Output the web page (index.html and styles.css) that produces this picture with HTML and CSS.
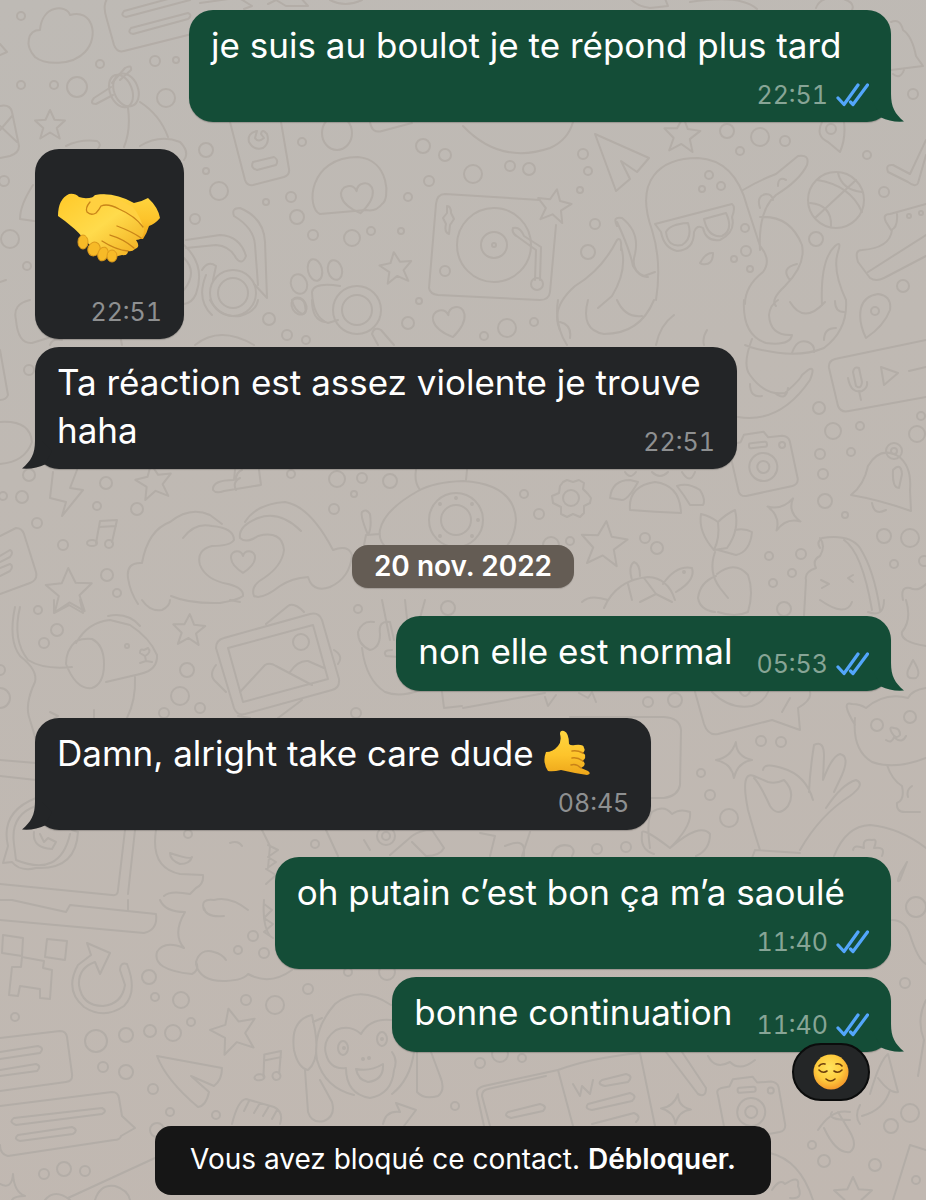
FILE: index.html
```html
<!DOCTYPE html>
<html lang="fr">
<head>
<meta charset="utf-8">
<meta name="viewport" content="width=device-width, initial-scale=1">
<title>Discussion</title>
<link rel="stylesheet" href="styles.css">
</head>
<body>
<svg class="wallpaper" viewBox="0 0 926 1200" preserveAspectRatio="xMidYMin slice" aria-hidden="true">
  <defs>
    <path id="star" vector-effect="non-scaling-stroke" d="M0-10L3-3.5L10-3L4.5 2L6.5 9L0 5L-6.5 9L-4.5 2L-10-3L-3-3.5Z"/>
    <path id="spark" vector-effect="non-scaling-stroke" d="M0-10Q1-2 10-1Q2 1 1 10Q-1 2-10 1Q-2-1 0-10Z"/>
    <path id="heart" vector-effect="non-scaling-stroke" d="M0 9C-14 0-11-9-5-9Q-1-9 0-5Q1-9 5-9C11-9 14 0 0 9Z"/>
    <g id="note"><path d="M-6 10L-2-12L15-13L10 9M-3-6L14-7"/><ellipse cx="-10" cy="10" rx="5" ry="3"/><ellipse cx="7" cy="11" rx="4" ry="4"/></g>
    <path id="plane" d="M-20-28L34-4L22 10L6-1L15 17L1 29Z"/>
    <g id="camera"><path d="M-32-16Q-34-22-28-23L-20-24L-16-31L4-32L8-26L22-26Q28-25 29-20L33 18Q33 24 27 25L-20 30Q-26 30-27 25Z"/><circle cx="0" cy="3" r="14"/><circle cx="0" cy="3" r="6"/><circle cx="21" cy="-17" r="3"/><rect x="-12" y="-22" width="18" height="5" rx="2"/></g>
  </defs>
  <!-- top left -->
  <path d="M40 30C42 5 66 4 70 15C92 8 100 36 85 52C72 66 45 65 35 57C24 45 28 30 40 30Z"/>
  <path d="M110-6C104 2 103 8 107 20L114 45Q117 53 124 51L192 34M124 11L190-7Q196-6 190 0L126 17Q120 16 124 11ZM131 28L188 13Q193 15 188 19L133 34Q127 33 131 28ZM200 3L250-4M236-4L252 6L244 9"/>
  <path d="M0 44L7 52L0 55M0 106Q10 104 12 112L19 146Q19 153 10 156L0 158M0 130L12 116M0 126L17 142"/>
  <ellipse cx="126" cy="90" rx="12" ry="17" transform="rotate(-22 126 90)"/><ellipse cx="121" cy="91" rx="11" ry="17" transform="rotate(-22 121 91)"/>
  <path d="M112 83L125 68Q132 64 131 70L120 80M111 87L94 98Q89 104 96 104L113 95M128 108Q131 130 124 147M140 102Q160 115 168 137M66 146Q80 139 97 141Q102 144 98 149M140 146Q160 134 180 142Q190 152 184 160M33 185Q20 205 20 219L34 221M0 282L6 280"/>
  <use href="#star" transform="translate(50 125) scale(1.5)"/>
  <path d="M230 122L245 180Q247 186 253 185L284 177Q290 175 289 169L281 122M253 162L274 157Q279 160 276 165L257 170Q250 168 253 162ZM257 131Q247 133 249 142Q254 151 263 148Q270 143 267 134Q262 128 261 134L264 138Q258 143 255 138Z"/>
  <ellipse cx="337" cy="133" rx="15" ry="17"/>
  <path d="M320 214C306 208 308 157 358 157C390 160 390 200 382 204Q376 212 366 210L320 214M370 122Q372 134 382 131L412 123"/>
  <use href="#heart" transform="translate(358 199) rotate(-10) scale(1.6)"/>
  <path d="M186 240L220 235Q240 236 246 256Q242 266 236 258Q230 246 216 245L186 248M234 216Q231 208 240 208Q264 218 265 242L267 298L254 284M258 285L255 245Q254 228 234 216M184 245Q206 265 196 294Q192 303 184 304M184 258Q198 272 184 290M202 270Q208 260 216 266L213 280M206 275Q196 300 212 315"/>
  <circle cx="233" cy="293" r="23"/><circle cx="233" cy="293" r="15"/>
  <ellipse cx="299" cy="284" rx="8" ry="10" transform="rotate(-20 299 284)"/><ellipse cx="315" cy="270" rx="7" ry="11" transform="rotate(-14 315 270)"/><ellipse cx="335" cy="270" rx="7" ry="10" transform="rotate(-14 335 270)"/><ellipse cx="299" cy="306" rx="7" ry="9" transform="rotate(-30 299 306)"/>
  <path d="M340 286Q314 282 312 292Q313 318 328 323L338 320M372 334Q374 326 381 330L394 345M372 334L378 345"/>
  <circle cx="357" cy="310" r="24"/><circle cx="357" cy="310" r="15"/>
  <use href="#star" transform="translate(396 268) rotate(-8) scale(1.6)"/>
  <use href="#heart" transform="translate(450 323) rotate(-12) scale(1.6)"/>
  <!-- turntable -->
  <path d="M540 200L445 194Q437 194 436 204L429 288Q430 294 438 295L540 300Q549 300 550 292L556 225M447 206Q451 206 451 213L454 219L450 225L449 234Q444 232 446 224L443 218L447 213ZM513 228Q520 226 524 236L541 247L540 280M513 228Q511 233 518 237L536 250L535 280"/>
  <circle cx="494" cy="245" r="37"/><circle cx="494" cy="245" r="13"/><circle cx="494" cy="245" r="2"/><circle cx="537" cy="284" r="6"/><circle cx="445" cy="271" r="5"/>
  <use href="#star" transform="translate(554 206) rotate(10) scale(1.7)"/>
  <!-- top right -->
  <path d="M463 126Q500 165 550 148Q568 140 573 122M628-5Q634 6 650 8L668 6L664-4M690 2Q740-6 757 9M330 0Q345 8 362 0M268 4L276 0L286 6L308 6L300-3M816 8Q820-4 840-2Q856 2 852 10"/>
  <use href="#plane" transform="translate(615 162)"/>
  <use href="#star" transform="translate(682 135) rotate(4) scale(1.8)"/>
  <path d="M652 230C634 180 660 158 698 158Q735 160 747 206L760 246Q772 260 763 272Q745 286 745 304M652 230Q662 262 656 300M655 224L732 204Q736 207 732 217Q736 232 720 240Q706 242 703 228Q697 224 694 232Q694 250 677 251Q664 248 661 232ZM666 232Q670 224 688 223Q693 238 682 245Q668 248 666 232ZM704 219L726 213Q734 230 722 236Q708 238 704 219ZM700 263Q706 252 713 253Q713 266 702 264ZM743 190Q760 180 776 174L798 156Q810 154 807 165Q800 180 776 195Q758 210 760 250M760 217Q790 215 802 245Q806 265 785 286Q770 300 776 306M617 226Q612 216 622 218Q640 232 635 254Q630 270 644 276L655 272M617 222Q630 250 633 266Q640 278 648 277M621 250Q622 236 617 240Q602 270 575 286Q550 308 560 330M621 246Q628 270 612 296L598 308M760 208Q756 196 766 194Q772 194 773 200M778 186Q778 176 786 180M822 305Q820 260 835 246Q842 240 838 252Q832 270 846 300M790 280Q780 268 797 264"/>
  <circle cx="836" cy="200" r="28"/><path d="M817 180Q850 185 862 212M810 203Q832 205 831 226M815 218L856 180M838 173Q842 190 862 192"/>
  <path d="M926 155L918 183Q916 188 908 182L888 172Q885 164 893 165L910 174L926 140M926 204L890 214Q882 214 886 222L891 230Q898 228 897 214M892 230Q890 248 862 250Q854 250 858 262L870 278Q876 282 884 278L926 256M868 272L926 235M822 122Q815 136 828 142L840 152Q846 138 844 122"/>
  <circle cx="831" cy="129" r="5"/><path d="M891 22Q900 18 903 30Q912 36 916 56L923 66L891 70M893 74Q900 80 904 70"/>
  <!-- octopus body, voice note, map pin -->
  <path d="M558 300Q554 325 567 345M588 300Q580 330 604 334Q640 334 654 300M656 345Q660 325 674 315M704 345Q702 338 707 330M617 300Q625 318 642 316M560 322Q572 325 570 338M744 300Q742 335 766 343Q790 346 792 335Q770 336 769 315Q770 305 778 300M846 300Q848 330 824 348Q795 360 750 347L745 345M752 339Q742 365 750 375Q765 396 785 393Q800 380 802 375L808 370Q816 365 810 380Q780 424 738 417M750 384Q750 398 762 396M775 393Q786 402 788 388M792 353Q797 338 808 342Q815 345 814 352M824 340Q824 328 836 328M835 301Q835 312 844 312M790 302Q804 325 825 302"/>
  <path d="M866 338Q858 322 861 308Q864 296 878 294Q892 296 890 310Q884 326 866 338ZM926 340L835 359Q828 361 829 368L838 406Q841 413 849 411L926 397M853 372Q854 366 859 368L862 382Q861 390 856 386ZM848 378Q851 394 862 391Q868 388 867 382M859 391L861 400M881 367L898 373L884 385ZM909 371L926 367"/>
  <circle cx="875" cy="311" r="4"/>
  <use href="#camera" transform="translate(763 464) rotate(-6)"/>
  <path d="M851 495Q864 485 868 466Q880 446 898 456Q912 466 910 490L911 511Q880 500 851 495ZM893 470Q901 462 902 474L899 488Q892 488 893 470ZM872 503Q874 516 886 510"/><circle cx="894" cy="451" r="8"/><circle cx="894" cy="451" r="3"/>
  <!-- left middle -->
  <path d="M30 300Q12 304 16 320Q18 344 32 343L48 338M0 350L8 395Q6 400 0 400M0 422Q30 420 32 442Q25 462 0 464M50 345Q52 338 62 340M195 345Q220 325 254 345M210 300Q220 318 240 316Q256 312 258 300M292 300Q300 296 304 302Q308 314 302 314Q294 310 292 300ZM312 300Q312 320 325 322M122 345L120 335"/>
  <path d="M53 472L50 498L66 502L62 516L83 490L70 488L77 470M235 470L234 480Q212 480 213 490Q216 494 224 491L261 485L259 470M236 480Q236 472 242 470M236 490Q232 482 240 478"/>
  <use href="#star" transform="translate(154 482) rotate(-10) scale(1.8)"/>
  <use href="#note" transform="translate(102 533)"/>
  <path d="M0 536L16 528Q22 528 24 534L36 572Q38 580 30 583L0 594M0 556L10 550Q14 552 10 557L0 562M0 568L10 564Q14 566 10 571L0 576"/>
  <use href="#star" transform="translate(69 591) rotate(-2) scale(2.3)"/>
  <path d="M142 563Q148 530 170 522Q190 506 210 515L222 524M183 538Q195 522 212 526Q234 528 234 540Q230 546 212 546Q196 550 200 565Q206 580 228 584Q244 588 243 596Q238 600 220 603Q190 604 171 596M142 563Q126 562 128 578Q130 592 138 604M245 522Q256 504 285 502Q310 506 333 550Q348 544 352 555Q350 578 330 587Q316 592 310 582L308 577M301 531Q280 510 258 518Q238 526 240 538Q246 544 258 536Q282 530 284 550Q282 566 264 578Q250 586 254 596Q262 600 280 586Q292 578 308 577"/>
  <use href="#heart" transform="translate(243 562) scale(1.2)"/>
  <!-- eye-shaped fish, gear, flower -->
  <path d="M418 491Q384 510 380 530Q376 550 414 562L486 562Q514 550 516 520Q514 484 463 481Q434 482 418 491ZM416 470Q414 482 420 490M467 470L466 480M368 535Q360 516 362 512Q366 508 370 514Q372 528 368 535ZM380 534L366 535L364 545"/>
  <circle cx="456" cy="520" r="27"/><circle cx="456" cy="520" r="15"/><circle cx="456" cy="498" r="1"/><circle cx="472" cy="504" r="1"/><circle cx="478" cy="520" r="1"/><circle cx="472" cy="536" r="1"/><circle cx="440" cy="504" r="1"/><circle cx="440" cy="536" r="1"/>
  <path d="M563 482L567 480L573 482L579 480L584 483L583 489L588 494L591 498L590 503L584 506L584 513L580 517L573 514L567 517L561 514L561 507L553 503L552 496L559 493L560 486Z"/><circle cx="571" cy="498" r="8"/>
  <path d="M630 510Q628 486 655 482Q680 485 681 513Q655 512 630 510ZM638 482Q628 500 622 500L610 498Q612 480 630 480ZM677 486Q688 482 700 490Q706 500 703 505L690 505Q684 495 677 486ZM625 472Q630 480 636 472M652 472Q660 480 668 472M682 472Q690 485 695 472"/>
  <use href="#star" transform="translate(604 544) rotate(6) scale(2.3)"/>
  <use href="#spark" transform="translate(784 514) rotate(30) scale(1.8)"/>
  <path d="M714 550Q698 532 701 514Q710 516 718 522Q720 538 714 550ZM718 522Q726 514 735 510Q740 530 727 548L714 550M735 530Q745 528 752 532Q750 552 736 555L718 550M715 552Q708 572 720 588L728 598M717 574Q735 560 748 575Q754 592 748 612Q735 618 718 612M716 576Q700 582 698 598Q700 610 715 612"/>
  <path d="M604 608Q616 580 648 577Q668 578 675 600M632 580Q628 566 634 562Q640 564 640 576M663 584Q676 565 692 568Q696 580 676 592M582 602Q590 594 608 600M644 578L656 594L672 602M656 594L640 602M628 584L632 600"/>
  <circle cx="684" cy="572" r="1"/><path d="M820 548Q816 542 822 538Q850 534 860 548Q874 570 880 610M820 538Q826 546 820 556Q812 560 816 568Q804 572 806 580L804 616M844 540Q862 552 872 610M821 580L829 584L822 588M853 575L848 578L853 582M903 600Q900 586 910 588Q918 592 926 584"/>
  <!-- dog, photo -->
  <path d="M15 607Q8 640 20 656Q38 670 35 682Q24 705 30 720L36 740M20 607Q12 640 28 660Q44 670 72 667M76 643Q88 622 110 620L130 625Q150 638 157 655Q158 670 140 674L106 682M108 616Q128 612 140 626M76 641Q66 650 66 664Q76 690 92 688Q104 684 104 664Q104 645 92 639Q84 638 76 641M135 677Q136 700 127 718M94 718L94 710M50 712L58 716L52 720M144 650Q140 648 140 653L145 656Q152 652 148 648ZM145 656L146 661L140 663M146 661L152 662M54 600L54 613L69 605L83 613L80 600M142 600Q150 612 162 610Q170 606 170 600M230 600L240 602"/>
  <circle cx="127" cy="646" r="2"/>
  <use href="#star" transform="translate(189 630) rotate(3) scale(1.6)"/>
  <path d="M224 638L310 614Q319 612 322 620L339 679Q340 688 332 690L245 714Q237 716 234 708L216 648Q216 640 224 638ZM228 648L313 625L328 679L243 702ZM240 692L265 665Q270 662 276 666L312 685M290 672Q298 660 308 661L324 668M266 624L288 606Q294 602 304 612M216 665Q208 675 216 682L226 692M334 650Q344 656 338 664M238 716L250 718M278 718L302 700"/>
  <circle cx="301" cy="642" r="8"/>
  <path d="M382 600L390 640M405 600L408 628M425 600L420 618M374 622Q362 620 358 632Q358 645 370 650Q380 648 380 634Q378 620 390 622L394 640M392 650Q382 650 386 656L398 657M362 648Q366 680 385 692Q400 698 420 690M442 692L444 708L462 706"/>
  <!-- middle right -->
  <path d="M545 697L548 706L556 695M579 693L588 698L592 692L596 702M695 692L704 724Q708 736 718 734L772 720L800 730L798 708Q812 700 810 692M712 692Q730 710 752 706Q764 702 768 692M740 692Q745 700 750 692M790 698L782 712M463 708L545 693M570 717L664 717Q680 718 681 730L680 785Q678 796 664 798L650 798"/>
  <path d="M855 725Q840 700 852 704Q860 704 866 708Q885 692 908 698Q912 690 926 688M855 718Q852 750 872 762Q895 770 926 758M887 765Q892 780 902 786Q905 800 897 803Q896 812 905 812L920 812M912 786Q906 790 908 797M892 733Q888 726 894 728Q900 728 900 735Q896 740 892 733ZM894 737Q892 744 886 740M895 738Q902 744 906 736M884 600Q884 618 868 612M820 600Q846 618 852 602M906 600Q912 620 902 632Q900 642 926 646M913 660Q922 674 916 678Q905 680 908 670Z"/>
  <circle cx="877" cy="725" r="6"/><circle cx="910" cy="717" r="6"/>
  <use href="#spark" transform="translate(734 760) rotate(6) scale(1.8)"/>
  <path d="M760 850Q755 835 748 810Q740 770 754 776L768 782Q776 784 784 780Q796 792 788 806Q778 818 770 806Q760 784 754 778M763 770Q764 762 782 768Q806 775 813 800M809 792Q810 770 814 745Q824 740 824 756L823 780Q832 756 840 754Q850 756 842 775L834 792M826 808Q842 784 856 780Q866 784 850 796Q820 815 800 850M755 850L800 853M755 850L752 858"/>
  <path d="M650 848Q646 820 652 812Q664 804 672 814Q680 808 690 812Q692 826 670 848M670 848Q640 825 642 834Q640 850 654 854M670 848Q700 822 710 834Q710 850 696 856M480 833L495 836L490 856M530 832L522 856M505 846Q524 838 524 850L524 856M552 856Q556 842 570 846Q576 850 572 856M834 856Q846 826 870 825Q900 828 926 848M853 850Q854 844 864 848Q862 838 872 840Q878 838 874 848Q886 846 882 856M907 862L900 880Q896 884 900 874L907 862"/>
  <!-- laptop, ghost, map -->
  <path d="M0 760L36 763M0 776L36 780M125 830L118 890Q118 896 112 895L0 884M135 830L128 894M3 863L12 862Q20 872 36 868Q76 870 78 832L72 830M3 863L8 846Q0 812 36 798M16 860L14 844Q10 815 36 806M16 860Q60 878 70 834M34 832Q32 848 52 849L56 842L48 838L44 842L40 834"/>
  <path d="M156 830Q150 868 180 874L203 875Q204 884 196 888L190 894Q170 890 164 896M170 853Q190 860 192 857Q190 864 180 864Q170 860 170 853ZM230 843Q238 840 242 846M262 830L270 846L268 868M268 845L278 850L268 857L276 862L266 869L276 875L266 884M326 830L338 856M364 840L370 850M390 855L412 836Q420 830 432 830L444 848Q440 856 426 856L412 842"/>
  <circle cx="386" cy="836" r="4"/><circle cx="386" cy="836" r="9"/>
  <path d="M0 900L12 900L66 912L70 905L156 914Q158 930 144 933L0 920M128 900L128 910M160 900Q165 912 185 912Q172 934 184 948Q164 940 157 952Q152 970 192 974Q200 970 196 962Q200 948 214 952Q222 954 226 960M196 964Q200 982 226 981Q244 980 248 974Q270 986 292 970M204 910Q200 898 214 900Q230 896 248 910M224 916Q206 918 204 908M264 904L272 910L264 918L273 924L264 932L273 938M264 900Q262 925 270 936"/>
  <path d="M3 935L23 938L22 956L2 953ZM47 939L67 941L65 960L45 957ZM22 957L44 961L43 968L52 970L50 999L40 998L40 989L20 986L18 996L9 995L12 967L21 967Z"/>
  <path d="M87 943L110 953L100 974L95 962Q78 968 79 985Q82 1006 103 1006Q122 1004 125 985L120 970Q120 962 127 964Q138 992 124 1006Q104 1020 84 1007Q64 990 78 965L91 955Z"/>
  <path d="M0 1038L60 1031Q66 1031 67 1037L72 1074Q73 1081 66 1082L0 1091M0 1052L38 1046Q45 1048 40 1053L0 1059M0 1070L36 1064Q42 1066 37 1071L0 1076M0 1106L112 1092Q118 1092 119 1098L122 1116L135 1128L121 1136Q120 1140 114 1140L8 1156Q0 1154 0 1145M14 1118L102 1108Q108 1111 102 1114L16 1125Q8 1122 14 1118ZM18 1135L72 1127Q79 1130 73 1134L20 1141Q13 1139 18 1135Z"/>
  <use href="#star" transform="translate(234 1031) rotate(-14) scale(2.3)"/>
  <path d="M157 1056L222 1068Q222 1080 214 1086L191 1076L209 1092Q206 1106 198 1107Q166 1080 157 1056Z"/>
  <use href="#note" transform="translate(268 1066) rotate(-8)"/>
  <path d="M232 1124Q238 1100 246 1099L274 1107Q284 1112 280 1124M249 1101L244 1111M260 1103L254 1113M269 1106L263 1116M277 1110L272 1119"/>
  <!-- monkey -->
  <path d="M391 1005Q360 984 335 1004Q312 1030 317 1060Q325 1088 354 1095M392 1094Q410 1080 414 1052M361 1034Q350 1024 336 1030Q322 1040 326 1054Q330 1070 346 1068Q346 1094 370 1098Q392 1094 394 1070Q398 1060 392 1052M361 1034Q370 1018 391 1020M312 1015Q290 1020 294 1050Q298 1068 308 1070Q320 1060 315 1030ZM322 1018L313 1022M305 1070L308 1112Q312 1124 324 1121Q336 1116 332 1102L320 1080M417 1052L417 1092Q424 1100 438 1096Q446 1090 440 1076L431 1052M356 1069Q370 1072 383 1064Q384 1080 368 1082Q358 1080 356 1069Z"/>
  <ellipse cx="343" cy="1048" rx="5" ry="7"/><ellipse cx="382" cy="1039" rx="5" ry="7"/><circle cx="344" cy="1048" r="1"/><circle cx="382" cy="1039" r="1"/><circle cx="363" cy="1059" r="1"/><circle cx="369" cy="1058" r="1"/>
  <path d="M383 1124Q386 1110 400 1112L396 1103L416 1110L404 1126"/>
  <!-- book, pencil, camera -->
  <path d="M484 1126L477 1094Q476 1088 484 1086L558 1070L573 1126M490 1126L482 1096Q482 1090 488 1089L546 1076M558 1070Q590 1058 640 1053L655 1126M508 1112L540 1104Q548 1106 543 1111L511 1118Q503 1116 508 1112ZM602 1080L626 1074Q634 1076 628 1082L605 1086Q596 1084 602 1080ZM588 1104L630 1093Q638 1096 632 1101L592 1110Q584 1109 588 1104ZM592 1124L634 1113Q642 1116 636 1122M573 1084L580 1096L582 1086L590 1094L593 1080M666 1052L698 1094Q706 1098 706 1088L682 1052M708 1056Q715 1070 730 1062Q740 1072 755 1060"/>
  <use href="#spark" transform="translate(676 1109) rotate(8) scale(1.5)"/>
  <use href="#camera" transform="translate(751 1109) rotate(-4)"/>
  <path d="M870 1094Q880 1060 888 1054L898 1092Q890 1094 878 1078M860 1105Q854 1116 860 1124M818 1130Q832 1108 850 1112M832 1112Q826 1120 850 1120M824 1128Q836 1154 850 1152Q858 1146 850 1132L838 1112M862 1116Q884 1110 890 1090M892 920Q905 920 910 935Q918 960 926 964M926 1000Q916 1020 924 1040L918 1076M893 1200L910 1145L926 1150"/>
  <use href="#star" transform="translate(853 1196) scale(1.9)"/>
  <path d="M0 1184Q12 1190 13 1174Q14 1192 25 1196Q14 1196 12 1200M68 1198L155 1158M95 1200Q100 1184 115 1186Q128 1190 130 1200M45 1200Q55 1188 70 1200M770 1153Q800 1160 813 1200M772 1190Q780 1178 785 1184Q800 1174 798 1186Q804 1200 790 1198"/>
  <!-- bubbles scattered between drawings -->
  <g>
    <circle cx="21" cy="16" r="4"/><circle cx="100" cy="64" r="4"/><circle cx="155" cy="61" r="5"/><circle cx="176" cy="60" r="3"/><circle cx="21" cy="85" r="4"/><circle cx="54" cy="85" r="4"/><circle cx="77" cy="87" r="10"/><circle cx="166" cy="98" r="9"/><circle cx="206" cy="150" r="7"/><circle cx="206" cy="171" r="3"/><circle cx="219" cy="191" r="9"/><circle cx="4" cy="181" r="5"/><circle cx="10" cy="239" r="9"/><circle cx="27" cy="266" r="4"/><circle cx="302" cy="142" r="4"/><circle cx="423" cy="146" r="7"/><circle cx="445" cy="155" r="6"/><circle cx="429" cy="181" r="5"/><circle cx="408" cy="197" r="4"/><circle cx="291" cy="197" r="5"/><circle cx="266" cy="202" r="3"/><circle cx="297" cy="217" r="7"/><circle cx="195" cy="219" r="5"/><circle cx="313" cy="235" r="5"/><circle cx="371" cy="231" r="4"/><circle cx="352" cy="238" r="8"/><circle cx="401" cy="231" r="3"/>
    <circle cx="473" cy="174" r="9"/><circle cx="510" cy="166" r="5"/><circle cx="529" cy="169" r="6"/><circle cx="583" cy="154" r="5"/><circle cx="588" cy="171" r="4"/><circle cx="580" cy="190" r="3"/><circle cx="595" cy="224" r="5"/><circle cx="588" cy="252" r="7"/><circle cx="709" cy="175" r="4"/><circle cx="702" cy="189" r="3"/><circle cx="721" cy="186" r="4"/><circle cx="727" cy="131" r="7"/><circle cx="760" cy="137" r="9"/><circle cx="785" cy="141" r="5"/><circle cx="740" cy="151" r="4"/><circle cx="867" cy="155" r="4"/><circle cx="884" cy="192" r="5"/><circle cx="816" cy="239" r="7"/><circle cx="903" cy="286" r="6"/><circle cx="746" cy="251" r="5"/><circle cx="734" cy="259" r="3"/><circle cx="745" cy="228" r="4"/><circle cx="750" cy="269" r="3"/><circle cx="909" cy="216" r="2"/><circle cx="921" cy="213" r="2"/><circle cx="913" cy="94" r="5"/>
    <circle cx="269" cy="319" r="6"/><circle cx="287" cy="335" r="5"/><circle cx="306" cy="340" r="4"/><circle cx="408" cy="323" r="6"/><circle cx="419" cy="301" r="3"/><circle cx="507" cy="328" r="9"/><circle cx="534" cy="322" r="4"/><circle cx="484" cy="336" r="4"/><circle cx="29" cy="370" r="5"/><circle cx="29" cy="475" r="6"/><circle cx="22" cy="497" r="6"/><circle cx="3" cy="496" r="4"/><circle cx="106" cy="483" r="6"/><circle cx="97" cy="506" r="4"/><circle cx="137" cy="509" r="6"/><circle cx="37" cy="523" r="5"/><circle cx="63" cy="545" r="5"/><circle cx="107" cy="575" r="6"/><circle cx="117" cy="593" r="4"/><circle cx="291" cy="474" r="4"/><circle cx="337" cy="479" r="8"/><circle cx="362" cy="478" r="5"/><circle cx="390" cy="481" r="7"/><circle cx="354" cy="494" r="3"/><circle cx="334" cy="509" r="5"/>
    <circle cx="819" cy="408" r="6"/><circle cx="833" cy="431" r="8"/><circle cx="860" cy="426" r="4"/><circle cx="921" cy="416" r="4"/><circle cx="917" cy="434" r="8"/><circle cx="820" cy="454" r="5"/><circle cx="851" cy="452" r="4"/><circle cx="823" cy="474" r="5"/><circle cx="825" cy="501" r="7"/><circle cx="845" cy="515" r="3"/><circle cx="524" cy="494" r="4"/><circle cx="539" cy="514" r="5"/><circle cx="551" cy="545" r="8"/><circle cx="570" cy="541" r="4"/><circle cx="645" cy="538" r="5"/><circle cx="657" cy="548" r="6"/><circle cx="769" cy="556" r="4"/><circle cx="801" cy="554" r="5"/><circle cx="792" cy="573" r="4"/><circle cx="773" cy="583" r="4"/><circle cx="884" cy="536" r="7"/><circle cx="910" cy="538" r="9"/><circle cx="894" cy="564" r="4"/><circle cx="924" cy="561" r="5"/>
    <circle cx="38" cy="610" r="4"/><circle cx="57" cy="630" r="6"/><circle cx="44" cy="643" r="5"/><circle cx="0" cy="670" r="5"/><circle cx="0" cy="698" r="10"/><circle cx="187" cy="670" r="7"/><circle cx="180" cy="696" r="9"/><circle cx="200" cy="708" r="5"/><circle cx="164" cy="713" r="5"/><circle cx="356" cy="713" r="5"/><circle cx="358" cy="609" r="4"/><circle cx="448" cy="608" r="7"/><circle cx="784" cy="609" r="7"/><circle cx="648" cy="702" r="5"/><circle cx="675" cy="700" r="7"/><circle cx="761" cy="741" r="5"/><circle cx="781" cy="742" r="5"/><circle cx="701" cy="773" r="4"/><circle cx="710" cy="795" r="5"/><circle cx="729" cy="818" r="9"/><circle cx="597" cy="849" r="5"/><circle cx="626" cy="847" r="5"/><circle cx="188" cy="834" r="4"/><circle cx="315" cy="844" r="4"/><circle cx="916" cy="907" r="10"/><circle cx="905" cy="983" r="5"/>
    <circle cx="253" cy="936" r="5"/><circle cx="238" cy="950" r="4"/><circle cx="264" cy="953" r="5"/><circle cx="149" cy="977" r="7"/><circle cx="155" cy="997" r="4"/><circle cx="181" cy="1000" r="8"/><circle cx="246" cy="1000" r="5"/><circle cx="275" cy="1005" r="9"/><circle cx="308" cy="989" r="5"/><circle cx="348" cy="972" r="4"/><circle cx="387" cy="972" r="8"/><circle cx="191" cy="1022" r="4"/><circle cx="173" cy="1033" r="8"/><circle cx="150" cy="1031" r="6"/><circle cx="126" cy="1035" r="7"/><circle cx="96" cy="1041" r="11"/><circle cx="103" cy="1067" r="5"/><circle cx="126" cy="1072" r="7"/><circle cx="15" cy="1017" r="4"/><circle cx="153" cy="1089" r="5"/><circle cx="170" cy="1112" r="4"/><circle cx="216" cy="1115" r="4"/><circle cx="157" cy="1130" r="7"/><circle cx="44" cy="1174" r="5"/><circle cx="64" cy="1169" r="7"/><circle cx="85" cy="1171" r="5"/><circle cx="455" cy="1106" r="4"/><circle cx="480" cy="1063" r="5"/><circle cx="500" cy="1054" r="8"/><circle cx="522" cy="1058" r="4"/><circle cx="910" cy="1113" r="9"/><circle cx="891" cy="1126" r="7"/><circle cx="812" cy="1145" r="4"/><circle cx="824" cy="1161" r="6"/><circle cx="875" cy="1165" r="6"/><circle cx="916" cy="1180" r="4"/>
  </g>
</svg>

<svg class="defs" width="0" height="0" aria-hidden="true">
  <defs>
    <symbol id="read" viewBox="0 0 33 24"><path fill="none" stroke="#53a6fb" stroke-width="3.2" stroke-linecap="round" stroke-linejoin="round" d="M2 15L8 21.500L22 2M14.500 19L17 21.500L31.500 2"/></symbol>
    <symbol id="tail" viewBox="0 0 30 28"><path fill="currentColor" d="M17 0C17 13 21 20 30 27.500Q17 28.500 7 23.500L0 10L10 0Z"/></symbol>
  </defs>
</svg>

<main class="chat">
  <section class="group">
    <article class="bubble bubble--out bubble--wide bubble--stacked">
      <p class="text">je suis au boulot je te répond plus tard</p>
      <div class="meta"><time>22:51</time><svg class="read" role="img" aria-label="Lu"><use href="#read"/></svg></div>
      <svg class="tail" aria-hidden="true"><use href="#tail"/></svg>
    </article>
  </section>

  <section class="group">
    <article class="bubble bubble--in">
      <svg class="handshake" viewBox="0 0 105 136" role="img" aria-label="Poignée de main">
        <defs>
          <linearGradient id="skin" x1="0" y1="0" x2="0" y2="1"><stop offset="0" stop-color="#ffd640"/><stop offset=".55" stop-color="#fdc42b"/><stop offset="1" stop-color="#eda61a"/></linearGradient>
          <linearGradient id="hand" x1="0" y1="0" x2="1" y2="1"><stop offset="0" stop-color="#ffc928"/><stop offset=".5" stop-color="#ffdb4c"/><stop offset="1" stop-color="#f0aa1c"/></linearGradient>
        </defs>
        <path fill="url(#skin)" d="M39 35Q57 32 77 43Q84 42 91 38Q101 47 103 58Q98 64 92 66Q90 73 86 79L62 78L33 56Z"/>
        <path fill="url(#hand)" d="M12 34Q18 33 22 37Q30 40 44 35L50 40L78 58Q88 64 87 71Q86 80 79 80Q84 87 78 89Q75 92 71 91Q71 96 65 95L53 98L29 82Q22 72 14 66Q7 60 1 56Q1 39 12 34Z"/>
        <g fill="#f7ba27" stroke="#dc9a1c" stroke-width="1"><ellipse cx="26" cy="82" rx="5" ry="7"/><ellipse cx="37" cy="89" rx="6" ry="7" transform="rotate(22 37 89)"/><ellipse cx="46" cy="94" rx="5" ry="7" transform="rotate(18 46 94)"/><ellipse cx="55" cy="96" rx="5" ry="6"/></g>
        <path fill="#ffd040" d="M38 35Q49 33 61 39L76 47Q83 56 86 67Q68 50 52 46Q45 45 43 50Q40 57 34 54Q28 52 30 47Q33 39 38 35Z"/>
        <g fill="none" stroke="#c98519" stroke-width="1.300" stroke-linecap="round"><path d="M33 42Q28 48 30 52Q34 56 39 53Q42 50 44 46Q51 43 62 49Q78 56 86 67M60 66Q76 72 84 78M53 75Q67 79 77 88M45 81Q59 90 71 91"/></g>
      </svg>
      <div class="meta"><time>22:51</time></div>
    </article>
    <article class="bubble bubble--in bubble--wide bubble--wrap">
      <p class="text">Ta réaction est assez violente je trouve haha</p>
      <div class="meta"><time>22:51</time></div>
      <svg class="tail" aria-hidden="true"><use href="#tail"/></svg>
    </article>
  </section>

  <h2 class="date">20 nov. 2022</h2>

  <section class="group">
    <article class="bubble bubble--out bubble--inline">
      <p class="text">non elle est normal</p>
      <div class="meta"><time>05:53</time><svg class="read" role="img" aria-label="Lu"><use href="#read"/></svg></div>
      <svg class="tail" aria-hidden="true"><use href="#tail"/></svg>
    </article>
  </section>

  <section class="group">
    <article class="bubble bubble--in bubble--medium bubble--stacked">
      <p class="text">Damn, alright take care dude
        <svg class="shaka" viewBox="0 0 46 46" role="img" aria-label="Appelle-moi"><path fill="url(#skin)" d="M2 22Q9 22 14 16Q18 11 16 4Q16 0 20 1Q25 3 25 14Q27 16 31 15Q40 14 40 18Q42 21 38 23Q42 24 41 27Q42 29 38 31Q42 32 40 36L37 38L44 41Q48 44 43 45L31 43L17 40Q9 42 4 41Q-2 32 2 22Z"/><path d="M28 21Q33 20 39 23M28 28Q33 27 39 31M27 35Q32 33 37 38" fill="none" stroke="#c98318" stroke-width="1.500" stroke-linecap="round"/></svg>
      </p>
      <div class="meta"><time>08:45</time></div>
      <svg class="tail" aria-hidden="true"><use href="#tail"/></svg>
    </article>
  </section>

  <section class="group">
    <article class="bubble bubble--out bubble--medium bubble--stacked">
      <p class="text">oh putain c’est bon ça m’a saoulé</p>
      <div class="meta"><time>11:40</time><svg class="read" role="img" aria-label="Lu"><use href="#read"/></svg></div>
    </article>
    <article class="bubble bubble--out bubble--inline">
      <p class="text">bonne continuation</p>
      <div class="meta"><time>11:40</time><svg class="read" role="img" aria-label="Lu"><use href="#read"/></svg></div>
      <svg class="tail" aria-hidden="true"><use href="#tail"/></svg>
      <button class="reaction" type="button" aria-label="Réaction : soulagé">
        <svg class="face" viewBox="0 0 36 36" aria-hidden="true">
          <defs><radialGradient id="face" cx=".45" cy=".38" r=".62"><stop offset="0" stop-color="#ffe45e"/><stop offset=".6" stop-color="#fecb3d"/><stop offset="1" stop-color="#f4992b"/></radialGradient></defs>
          <circle cx="18" cy="18" r="17.500" fill="url(#face)"/>
          <path d="M6 16Q10 20 14 17M21 17Q25 20 29 16M13 25Q17.500 29 22 25M6 12Q8 9 12 10M23 10Q27 9 29 12" fill="none" stroke="#6b3d0c" stroke-width="1.600" stroke-linecap="round"/>
        </svg>
      </button>
    </article>
  </section>

  <p class="blocked">Vous avez bloqué ce contact. <button class="unblock" type="button">Débloquer.</button></p>
</main>
</body>
</html>
```
FILE: styles.css
```css
* { box-sizing: border-box; }

body {
  position: relative;
  min-height: 100vh;
  margin: 0;
  overflow-x: hidden;
  background: linear-gradient(170deg, #bebab5, #bfb9b3 35%, #c1b8b1);
  color: #fff;
  font-family: Inter, "Liberation Sans", sans-serif;
}

p, h2 { margin: 0; }

button {
  padding: 0;
  border: 0;
  background: none;
  color: inherit;
  font: inherit;
  cursor: pointer;
}

.wallpaper {
  position: absolute;
  inset: 0;
  z-index: -1;
  width: 100%;
  height: 100%;
  fill: none;
  stroke: #b3ada7;
  stroke-width: 2;
  stroke-linecap: round;
  stroke-linejoin: round;
}

.defs { position: absolute; }

.chat {
  display: flex;
  flex-direction: column;
  gap: 27px;
  padding: 10px 35px 5px;
}

.group {
  display: flex;
  flex-direction: column;
  align-items: flex-start;
  gap: 8px;
}

.bubble {
  position: relative;
  display: grid;
  max-width: 100%;
  padding: 11px 22px;
  border-radius: 24px;
  box-shadow: 0 1px 1px rgba(0, 0, 0, 0.2);
}

.bubble--in { background: #232527; color: #232527; }
.bubble--out { align-self: flex-end; background: #144d37; color: #144d37; }
.bubble--wide { width: 82%; }
.bubble--medium { width: 72%; }
.bubble--stacked { row-gap: 10px; }
.bubble--inline { grid-template-columns: auto auto; column-gap: 24px; }

.bubble--wrap {
  display: flow-root;
  font-size: 35px;
  line-height: 48px;
}

.text {
  color: #fff;
  font-size: 35px;
  line-height: 48px;
}

.bubble--inline .text { padding-bottom: 5px; }
.bubble--wrap .text { display: inline; }

.meta {
  display: flex;
  align-items: center;
  align-self: end;
  justify-self: end;
  gap: 8px;
  color: #8e9091;
  font-size: 25px;
  font-variant-numeric: tabular-nums;
  line-height: 32px;
}

.bubble--out .meta { color: #87a596; }

/* the time sits beside the last line of a wrapped message */
.bubble--wrap .meta {
  float: right;
  margin-top: 20px;
}

.read { width: 33px; height: 24px; }

.tail {
  position: absolute;
  right: -13px;
  bottom: 0;
  width: 30px;
  height: 28px;
}

.bubble--in .tail {
  right: auto;
  left: -13px;
  transform: scaleX(-1);
}

.handshake { width: 105px; height: 136px; }

.shaka {
  width: 46px;
  height: 46px;
  margin: 1px 0 -8px;
  vertical-align: top;
}

.reaction {
  position: absolute;
  right: 21px;
  bottom: -49px;
  display: grid;
  place-items: center;
  width: 78px;
  height: 58px;
  border: 2px solid #0b0c0c;
  border-radius: 29px;
  background: #242627;
}

.face { width: 36px; height: 36px; }

.date {
  align-self: center;
  margin: 49px 0 1px;
  padding: 5px 22px;
  border-radius: 16px;
  background: #645c54;
  font-size: 28px;
  font-weight: 600;
  line-height: 33px;
  box-shadow: 0 1px 1px rgba(0, 0, 0, 0.15);
}

.blocked {
  align-self: center;
  margin-top: 47px;
  padding: 15px 35px 18px;
  border-radius: 16px;
  background: #161616;
  font-size: 28px;
  line-height: 36px;
}

.unblock { font-weight: 600; }
```
